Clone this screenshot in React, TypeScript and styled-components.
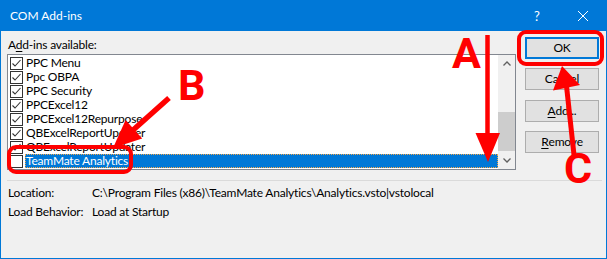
import React from "react";
import styled, { createGlobalStyle, css } from "styled-components";

const UI_FONT = `Lato, "Noto Sans", "Open Sans", sans-serif`;
const RED = "#ff0000";
const BLUE = "#0078d7";

const GlobalStyle = createGlobalStyle`
  html, body { margin: 0; padding: 0; background: #ffffff; }
  #root { width: 607px; height: 259px; }
`;

const Stage = styled.div`
  position: relative;
  width: 607px;
  height: 259px;
`;

const Window = styled.div`
  box-sizing: border-box;
  width: 607px;
  height: 259px;
  display: flex;
  flex-direction: column;
  background: #f0f0f0;
  border: 1px solid ${BLUE};
  border-top: none;
  font-family: ${UI_FONT};
  font-size: 12px;
  letter-spacing: -0.2px;
  color: #000;
  overflow: hidden;
`;

const TitleBar = styled.div`
  height: 31px;
  flex: none;
  display: flex;
  align-items: center;
  background: ${BLUE};
  color: #fff;
  padding-left: 9px;
  letter-spacing: 0;
`;

const TitleText = styled.span`
  flex: 1;
  line-height: 16px;
`;

const CaptionButton = styled.div`
  width: 46px;
  height: 31px;
  display: flex;
  align-items: center;
  justify-content: center;
  color: #fff;
  font-size: 13px;
`;

const Body = styled.div`
  flex: 1;
  display: flex;
  flex-direction: column;
  padding: 6px 7px 0 6px;
`;

const MainRow = styled.div`
  display: flex;
  gap: 9px;
`;

const LeftColumn = styled.div`
  width: 509px;
  display: flex;
  flex-direction: column;
`;

const FieldLabel = styled.div`
  height: 16px;
  line-height: 16px;
  padding-left: 1px;
  margin-bottom: 1px;
`;

const AccessKey = styled.span`
  text-decoration: underline;
  text-underline-offset: 2px;
`;

const ListBox = styled.div`
  box-sizing: border-box;
  height: 116px;
  border: 1px solid #828790;
  background: #fff;
  display: flex;
`;

const Rows = styled.div`
  flex: 1;
  padding-top: 1px;
  display: flex;
  flex-direction: column;
  overflow: hidden;
`;

const Row = styled.div`
  height: 14px;
  flex: none;
  display: flex;
  align-items: center;
`;

const CheckBox = styled.span`
  box-sizing: border-box;
  width: 13px;
  height: 13px;
  margin-left: 2px;
  flex: none;
  border: 1px solid #333;
  background: #fff;
  display: flex;
  align-items: center;
  justify-content: center;
`;

const ItemText = styled.span<{ $selected?: boolean }>`
  box-sizing: border-box;
  height: 14px;
  line-height: 14px;
  margin-left: 2px;
  padding: 0 1px;
  white-space: nowrap;
  ${(p) =>
    p.$selected &&
    css`
      flex: 1;
      background: ${BLUE};
      color: #fff;
      outline: 1px dotted #f3a64a;
      outline-offset: -1px;
    `}
`;

const ScrollBar = styled.div`
  width: 17px;
  flex: none;
  background: #f0f0f0;
  display: flex;
  flex-direction: column;
`;

const ScrollArrow = styled.div`
  height: 17px;
  flex: none;
  display: flex;
  align-items: center;
  justify-content: center;
`;

const ScrollTrack = styled.div`
  flex: 1;
  display: flex;
  flex-direction: column;
  justify-content: flex-end;
  padding-bottom: 1px;
`;

const ScrollThumb = styled.div`
  height: 39px;
  background: #cdcdcd;
`;

const ButtonColumn = styled.div`
  width: 74px;
  display: flex;
  flex-direction: column;
`;

const DialogButton = styled.button<{ $default?: boolean; $gap?: number }>`
  box-sizing: border-box;
  height: 22px;
  margin: ${(p) => p.$gap ?? 0}px 0 0 0;
  padding: 0;
  border: 1px solid #adadad;
  background: #e1e1e1;
  font: inherit;
  letter-spacing: inherit;
  color: #000;
  line-height: 16px;
  display: flex;
  align-items: center;
  justify-content: center;
  ${(p) =>
    p.$default &&
    css`
      border: 2px solid ${BLUE};
    `}
`;

const Separator = styled.div`
  height: 1px;
  background: #dadada;
  margin: 10px -3px 4px 0;
`;

const InfoGrid = styled.div`
  display: grid;
  grid-template-columns: 84px auto;
  row-gap: 3px;
  padding-left: 1px;
  line-height: 16px;
  white-space: nowrap;
`;

const Overlay = styled.svg`
  position: absolute;
  left: 0;
  top: 0;
  pointer-events: none;
`;

const Marker = styled.span<{ $x: number; $y: number }>`
  position: absolute;
  left: ${(p) => p.$x}px;
  top: ${(p) => p.$y}px;
  font-family: Roboto, "Liberation Sans", sans-serif;
  font-weight: 700;
  font-size: 43px;
  line-height: 31px;
  color: ${RED};
  pointer-events: none;
`;

const items: { name: string; checked: boolean; selected?: boolean }[] = [
  { name: "PPC Menu", checked: true },
  { name: "Ppc OBPA", checked: true },
  { name: "PPC Security", checked: true },
  { name: "PPCExcel12", checked: true },
  { name: "PPCExcel12Repurpose", checked: true },
  { name: "QBExcelReportUpdater", checked: true },
  { name: "QBExcelReportUpdater", checked: true },
  { name: "TeamMate Analytics", checked: false, selected: true },
];

const CheckMark = () => (
  <svg width="11" height="11" viewBox="0 0 11 11">
    <polyline points="1.5,5.5 4,8 9.5,2" fill="none" stroke="#333" strokeWidth="1.1" />
  </svg>
);

const Chevron = ({ up }: { up?: boolean }) => (
  <svg width="8" height="5" viewBox="0 0 8 5">
    <polyline
      points={up ? "0.5,4.5 4,1 7.5,4.5" : "0.5,0.5 4,4 7.5,0.5"}
      fill="none"
      stroke="#606060"
      strokeWidth="1.3"
    />
  </svg>
);

export default function App() {
  return (
    <>
      <GlobalStyle />
      <Stage>
        <Window>
          <TitleBar>
            <TitleText>COM Add-ins</TitleText>
            <CaptionButton>?</CaptionButton>
            <CaptionButton>
              <svg width="10" height="10" viewBox="0 0 10 10">
                <path d="M0 0 L10 10 M10 0 L0 10" stroke="#fff" strokeWidth="1" />
              </svg>
            </CaptionButton>
          </TitleBar>
          <Body>
            <MainRow>
              <LeftColumn>
                <FieldLabel>
                  A<AccessKey>d</AccessKey>d-ins available:
                </FieldLabel>
                <ListBox>
                  <Rows>
                    {items.map((it, i) => (
                      <Row key={i}>
                        <CheckBox>{it.checked && <CheckMark />}</CheckBox>
                        <ItemText $selected={it.selected}>{it.name}</ItemText>
                      </Row>
                    ))}
                  </Rows>
                  <ScrollBar>
                    <ScrollArrow>
                      <Chevron up />
                    </ScrollArrow>
                    <ScrollTrack>
                      <ScrollThumb />
                    </ScrollTrack>
                    <ScrollArrow>
                      <Chevron />
                    </ScrollArrow>
                  </ScrollBar>
                </ListBox>
              </LeftColumn>
              <ButtonColumn>
                <DialogButton $default>OK</DialogButton>
                <DialogButton $gap={9}>Cancel</DialogButton>
                <DialogButton $gap={10}>
                  <AccessKey>A</AccessKey>dd...
                </DialogButton>
                <DialogButton $gap={9}>
                  <AccessKey>R</AccessKey>emove
                </DialogButton>
              </ButtonColumn>
            </MainRow>
            <Separator />
            <InfoGrid>
              <span>Location:</span>
              <span>C:\Program Files (x86)\TeamMate Analytics\Analytics.vsto|vstolocal</span>
              <span>Load Behavior:</span>
              <span>Load at Startup</span>
            </InfoGrid>
          </Body>
        </Window>

        <Overlay width="607" height="259" viewBox="0 0 607 259">
          <g fill="none" stroke={RED} strokeWidth="4">
            <rect x="519" y="32" width="83" height="32" rx="7" />
            <rect x="9" y="147" width="122" height="25" rx="7" />
          </g>
          <g stroke={RED} fill={RED}>
            <line x1="487.5" y1="35" x2="487.5" y2="138" strokeWidth="4.5" />
            <polygon points="475.5,133 500,133 488,162" stroke="none" />
            <line x1="169" y1="98" x2="132" y2="131" strokeWidth="5.5" />
            <polygon points="142.2,138.6 125.6,120 113,148" stroke="none" />
            <line x1="574" y1="155" x2="566.5" y2="86" strokeWidth="5" />
            <polygon points="553,90.5 580,85 562,66" stroke="none" />
          </g>
        </Overlay>
        <Marker $x={452} $y={38}>A</Marker>
        <Marker $x={178} $y={70}>B</Marker>
        <Marker $x={564} $y={153}>C</Marker>
      </Stage>
    </>
  );
}
